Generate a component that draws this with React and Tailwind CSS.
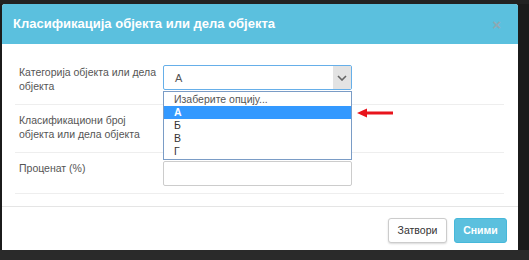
import React from "react";

export default function App() {
  const font = { fontFamily: '"Liberation Sans", Arial, sans-serif' };
  return (
    <div className="w-[529px] h-[260px] bg-[#1b1b1b] overflow-hidden flex flex-col" style={font}>
      <div className="h-[4px] shrink-0 bg-[#222]" />
      <div className="flex">
        <div className="w-[2px] shrink-0" />
        <div className="relative w-[516px] h-[246px] bg-white rounded-t-[3px] flex flex-col">
          {/* header */}
          <div className="h-[40px] shrink-0 bg-[#5bc0de] rounded-t-[3px] flex items-center justify-between pl-[11px] pr-[17px]">
            <span className="text-white text-[13px] font-bold">Класификација објекта или дела објекта</span>
            <span className="text-[#8fa9b3] text-[15px] font-bold leading-none">×</span>
          </div>
          {/* body */}
          <div className="pt-[13px] pb-[12px] pl-[13px] pr-[14px] text-[10.5px] text-[#555] leading-[14px]">
            <div className="flex border-b border-[#eee] pt-[8px] pb-[11px]">
              <div className="w-[148px] pl-[4px] shrink-0">Категорија објекта или дела објекта</div>
              <div className="w-[189px] h-[25px] border border-[#66afe9] rounded-[2px] flex items-center justify-between">
                <span className="pl-[11px] text-[#555] text-[11px]">А</span>
                <span className="w-[18px] h-[23px] bg-[#e3e3e3] flex items-center justify-center">
                  <svg width="10" height="6" viewBox="0 0 10 6">
                    <path d="M1 1 L5 5 L9 1" fill="none" stroke="#666" strokeWidth="1.6" />
                  </svg>
                </span>
              </div>
            </div>
            <div className="flex border-b border-[#eee] pt-[8px] pb-[11px]">
              <div className="w-[148px] pl-[4px] shrink-0">Класификациони број објекта или дела објекта</div>
              <div className="w-[189px] h-[25px] border border-[#ccc] rounded-[2px]" />
            </div>
            <div className="flex border-b border-[#eee] pt-[8px] pb-[7px]">
              <div className="w-[148px] pl-[4px] shrink-0">Проценат (%)</div>
              <div className="w-[189px] h-[25px] border border-[#ccc] rounded-[2px]" />
            </div>
          </div>
          {/* footer */}
          <div className="border-t border-[#e5e5e5] flex justify-end gap-[7px] pt-[11px] pr-[11px]">
            <button className="w-[59px] h-[25px] bg-white border border-[#ccc] rounded-[3px] text-[10.5px] text-[#333] shadow-[0_1px_2px_rgba(0,0,0,0.15)]">Затвори</button>
            <button className="w-[53px] h-[25px] bg-[#5bc0de] border border-[#46b8da] rounded-[3px] text-[10.5px] text-white font-bold">Сними</button>
          </div>

          {/* open dropdown list */}
          <div className="absolute left-[161px] top-[87px] w-[189px] h-[69px] bg-white border border-[#7a9cc6] text-[10.5px] text-[#333] leading-[13px] pt-[1px]">
            <div className="pl-[10px] text-[#555]">Изаберите опцију...</div>
            <div className="pl-[10px] bg-[#3399ff] text-white font-bold">А</div>
            <div className="pl-[10px]">Б</div>
            <div className="pl-[10px]">В</div>
            <div className="pl-[10px]">Г</div>
          </div>

          {/* red arrow */}
          <svg className="absolute left-[354px] top-[103px]" width="38" height="12" viewBox="0 0 38 12">
            <path d="M1 6 L11 1.5 L11 4.5 L37 4.5 L37 7.5 L11 7.5 L11 10.5 Z" fill="#e8141c" />
          </svg>
        </div>
        <div className="flex-1" />
      </div>
      <div className="flex-1 bg-[#2a2a2a]" />
    </div>
  );
}
